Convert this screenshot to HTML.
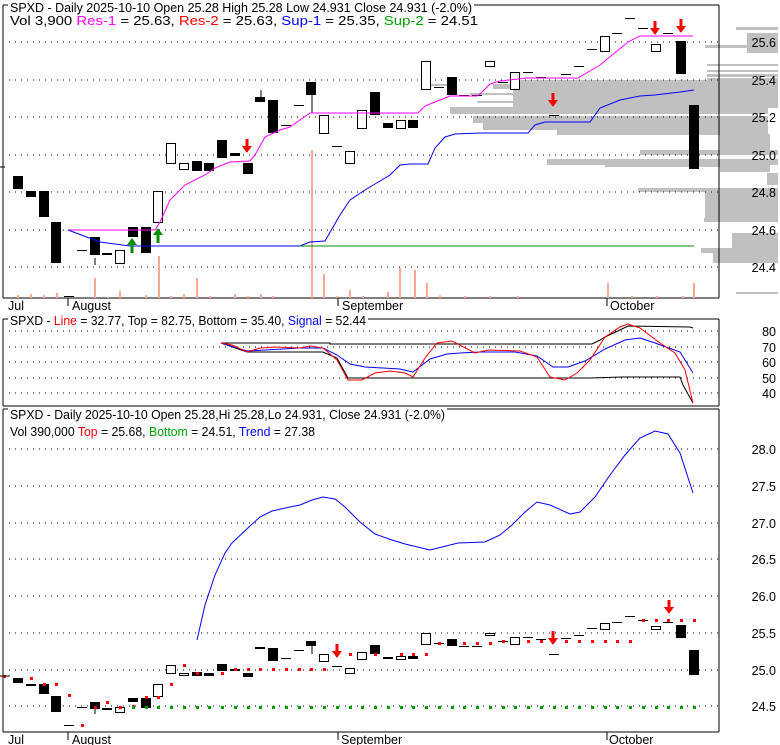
<!DOCTYPE html>
<html><head><meta charset="utf-8"><style>
html,body{margin:0;padding:0;background:#fff;}
svg{display:block;font-family:"Liberation Sans",Arial,sans-serif;}
</style></head><body>
<svg id="s" width="780" height="745" viewBox="0 0 780 745" xmlns="http://www.w3.org/2000/svg" shape-rendering="crispEdges">
<g id="g1" fill="#c0c0c0">
<rect x="736" y="27" width="42" height="3"/>
<rect x="747" y="33" width="31" height="20"/>
<rect x="705" y="45" width="73" height="3"/>
<rect x="707" y="64" width="71" height="2"/>
<rect x="707" y="70" width="71" height="2"/>
<rect x="707" y="74" width="71" height="3"/>
<rect x="707" y="78" width="71" height="2"/>
<rect x="520" y="80" width="258" height="28"/>
<rect x="493" y="84" width="30" height="5"/>
<rect x="513" y="89" width="10" height="18"/>
<rect x="430" y="84" width="20" height="2"/>
<rect x="470" y="93" width="50" height="2"/>
<rect x="477" y="101" width="45" height="2"/>
<rect x="450" y="107" width="318" height="7"/>
<rect x="473" y="116" width="295" height="7"/>
<rect x="483" y="123" width="285" height="7"/>
<rect x="557" y="130" width="211" height="5"/>
<rect x="720" y="134" width="50" height="16"/>
<rect x="640" y="150" width="138" height="5"/>
<rect x="547" y="159" width="231" height="6"/>
<rect x="605" y="165" width="115" height="2"/>
<rect x="720" y="165" width="50" height="7"/>
<rect x="767" y="173" width="11" height="12"/>
<rect x="638" y="188" width="81" height="4"/>
<rect x="705" y="188" width="73" height="30"/>
<rect x="704" y="218" width="74" height="4"/>
<rect x="732" y="233" width="46" height="15"/>
<rect x="701" y="248" width="77" height="5"/>
<rect x="713" y="253" width="65" height="10"/>
<rect x="736" y="292" width="42" height="2"/>
</g>
<g id="dyn"></g>
<g fill="#000" font-size="12.5">
<text x="10" y="12" textLength="462" lengthAdjust="spacingAndGlyphs">SPXD - Daily 2025-10-10 Open 25.28  High 25.28  Low 24.931  Close 24.931 (-2.0%)</text>
<text x="10" y="25" textLength="468" lengthAdjust="spacingAndGlyphs">Vol 3,900 <tspan fill="#ff00ff">Res-1</tspan> = 25.63, <tspan fill="#ff0000">Res-2</tspan> = 25.63, <tspan fill="#0000ff">Sup-1</tspan> = 25.35, <tspan fill="#00a000">Sup-2</tspan> = 24.51</text>
<text x="10" y="325" textLength="356" lengthAdjust="spacingAndGlyphs">SPXD - <tspan fill="#ff0000">Line</tspan> = 32.77, Top = 82.75, Bottom = 35.40, <tspan fill="#0000ff">Signal</tspan> = 52.44</text>
<text x="10" y="419" textLength="435" lengthAdjust="spacingAndGlyphs">SPXD - Daily 2025-10-10 Open 25.28,Hi 25.28,Lo 24.931, Close 24.931 (-2.0%)</text>
<text x="10" y="436" textLength="305" lengthAdjust="spacingAndGlyphs">Vol 390,000 <tspan fill="#ff0000">Top</tspan> = 25.68, <tspan fill="#00a000">Bottom</tspan> = 24.51, <tspan fill="#0000ff">Trend</tspan> = 27.38</text>
<text x="8" y="310">Jul</text><text x="72" y="310">August</text><text x="342" y="310">September</text><text x="610" y="310">October</text>
<text x="8" y="744">Jul</text><text x="72" y="744">August</text><text x="341" y="744">September</text><text x="609" y="744">October</text>
</g>
</svg>
<script>
(function(){
var g=document.getElementById("dyn"),h="";
function L(x1,y1,x2,y2,c,w,extra){h+='<line x1="'+x1+'" y1="'+y1+'" x2="'+x2+'" y2="'+y2+'" stroke="'+c+'" stroke-width="'+(w||1)+'" '+(extra||'')+'/>';}
function R(x,y,w,hh,f,s){h+='<rect x="'+x+'" y="'+y+'" width="'+w+'" height="'+hh+'" fill="'+f+'"'+(s?' stroke="'+s+'"':'')+'/>';}
function P(pts,c){h+='<polyline fill="none" stroke="'+c+'" stroke-width="1" shape-rendering="auto" points="'+pts+'"/>';}
function T(x,y,t){h+='<text x="'+x+'" y="'+y+'" text-anchor="end" font-size="12.5" fill="#000">'+t+'</text>';}
var dot='stroke-dasharray="1,5"';
function frame(t,b,tx){L(3,t,3,b,"#000");L(3,t,8,t,"#000");L(tx,t,719,t,"#000");L(719,t,719,b,"#000");L(3,b,719,b,"#000");}
frame(5,298,474);frame(319,406,368);frame(409,732,447);
[25.6,25.4,25.2,25.0,24.8,24.6,24.4].forEach(function(p){var y=Math.round(42+(25.6-p)*187.5);L(9,y,719,y,"#000",1,dot);T(776,y+5,p.toFixed(1));});
[80,70,60,50,40].forEach(function(v){var y=Math.round(331+(80-v)*1.55);L(9,y,719,y,"#000",1,dot);T(776,y+5,v);});
[28,27.5,27,26.5,26,25.5,25,24.5].forEach(function(p){var y=Math.round(596+(26-p)*73.5);L(9,y,719,y,"#000",1,dot);T(776,y+5,p.toFixed(1));});
[68,338,607].forEach(function(x){L(x,298,x,306,"#000");L(x,732,x,740,"#000");});
L(0,167,5,167,"#000");
var vol=[[18,295],[31,294],[44,295],[57,293],[95,278],[108,297],[120,291],[146,295],[159,256],[171,296],[184,294],[197,278],[210,296],[235,294],[248,296],[261,294],[273,296],[312,150],[324,274],[337,296],[350,290],[363,296],[388,292],[400,268],[415,270],[427,283],[440,295],[465,296],[490,296],[518,296],[608,283],[632,296],[657,296],[683,296],[694,283]];
vol.forEach(function(v){R(v[0]-1,v[1],2,298-v[1],"#f8a890");});
var C=[[678,683,'b'],[684,686,'b'],[684,694,'b'],[696,712,'b'],[725,725,'d'],[707,707,'d'],[702,709,'b'],[708,709,'b'],[707,712,'w'],[698,702,'b'],[698,708,'b'],[684,696,'w'],[665,673,'w'],[673,675,'w'],[672,676,'b'],[673,676,'b'],[664,671,'b'],[669,670,'b'],[673,677,'b'],[647,649,'b'],[648,661,'b'],[658,658,'d'],[650,650,'d'],[641,646,'b'],[654,661,'w'],[666,666,'d'],[668,673,'w'],[652,659,'w'],[645,654,'b'],[657,659,'b'],
[656,659,'w'],[656,659,'b'],[633,644,'w'],[643,643,'d'],[639,646,'b'],[646,646,'d'],[646,646,'d'],[633,635,'w'],[641,641,'d'],[637,644,'w'],[637,637,'d'],[639,639,'d'],[654,654,'d'],[638,638,'d'],[635,635,'d'],[628,628,'d'],[623,629,'w'],[622,622,'d'],[616,616,'d'],[620,620,'d'],[626,629,'w'],[622,622,'d'],[625,638,'b'],[650,675,'b']];
function y1(y3){return Math.round(-33+(y3-596)*2.551);}
function candle(x,t,b,k){
 if(k=='d'){L(x-5,t+0.5,x+5,t+0.5,"#000");return;}
 var hh=Math.max(b-t,2);
 if(k=='b')R(x-5,t,10,hh,"#000");
 else{R(x-5,t,10,hh+1,"#000");R(x-4,t+1,8,Math.max(hh-1,1),"#fff");}
}
C.forEach(function(c,i){var x=Math.round(18+12.75*i);
 candle(x,c[0],c[1],c[2]);
 candle(x,y1(c[0]),c[2]=='d'?y1(c[0]):y1(c[1]),c[2]);
});
L(95,709,95,714,"#000");L(312,646,312,654,"#000");L(312,87,312,113,"#000");L(95,258,95,265,"#000");L(261,90,261,97,"#000");
P("68,230 155,230 160,222 170,200 185,185 205,175 215,168 230,162 250,161 255,155 265,137 280,130 290,127 300,120 310,113 418,113 425,106 440,100 450,96 477,96 480,94 490,84 500,81 527,78 578,78 600,65 628,42 640,36 693,36","#ff00ff");
P("68,230 100,242 130,246 300,246 310,242 325,241 340,215 350,200 365,190 380,181 390,175 400,165 410,164 428,164 435,148 445,137 455,134 480,133 528,133 535,125 545,122 590,122 600,108 620,100 640,96 655,95 680,92 694,90","#0000ff");
L(300,246,694,246,"#009000");
P("221,343 330,343 330,344 592,344 600,340 605,337 622,329 628,326 690,327 693,328","#000");
P("221,343 247,352 323,352 337,358 348,378 590,378 622,377 680,377 683,385 693,403","#000");
P("221,343 247,351 300,348 323,348 337,355 350,364 365,367 400,369 413,372 430,359 447,354 460,353 480,352 515,352 537,356 553,367 568,367 585,361 605,349 625,340 640,338 655,343 680,352 693,373","#0000ff");
P("221,343 232,345 247,352 260,348 275,347 300,348 310,346 323,348 337,360 348,380 362,380 375,373 390,371 405,373 413,377 425,358 437,343 452,341 475,353 488,350 520,351 537,357 550,377 565,380 577,373 590,360 605,337 620,327 628,324 640,328 660,343 675,353 685,370 693,403","#ff0000");
P("197,640 205,605 215,575 225,553 232,543 250,526 260,517 272,511 290,507 300,505 312,500 323,497 335,499 345,507 360,522 375,534 392,540 405,544 430,550 458,543 485,542 500,535 512,525 525,512 537,502 550,505 570,514 580,512 595,497 610,475 625,455 640,438 655,431 668,434 680,453 693,493","#0000ff");
var rd={1:678,2:684,3:684,4:695,5:725,6:707,7:702,8:707,9:706,10:697,11:697,12:684,13:665,14:673,16:673,17:669,18:669,19:669,20:669,21:669,22:669,23:669,24:669,26:654,28:654,30:654,31:654,32:654,33:643,35:643,36:643,37:643,38:641,40:641,41:641,43:641,44:641,45:641,46:641,47:641,48:641,49:620,50:620,51:620,52:620,53:620};
for(var k in rd){var x=Math.round(18+12.75*k);R(x-1,rd[k]-1,3,3,"#ff0000");}
R(3,675,3,3,"#ff0000");L(0,676,10,676,"#000");
for(var i=9;i<=53;i++){var x=Math.round(18+12.75*i);R(x-1,706,3,3,"#00a000");}
function arrow(x,y,c,up){ if(!up){h+='<path d="M'+(x-1.5)+','+y+'h3v7h3.5l-5,7l-5,-7h3.5z" fill="'+c+'"/>';}
 else{h+='<path d="M'+x+','+y+'l5,7h-3.5v8h-3v-8h-3.5z" fill="'+c+'"/>';}}
arrow(247,139,"#ff0000");arrow(553,93,"#ff0000");arrow(655,21,"#ff0000");arrow(681,19,"#ff0000");
arrow(132,238,"#009000",1);arrow(158,228,"#009000",1);
arrow(337,644,"#ff0000");arrow(553,631,"#ff0000");arrow(669,600,"#ff0000");
g.innerHTML=h;
})();
</script>
</body></html>
